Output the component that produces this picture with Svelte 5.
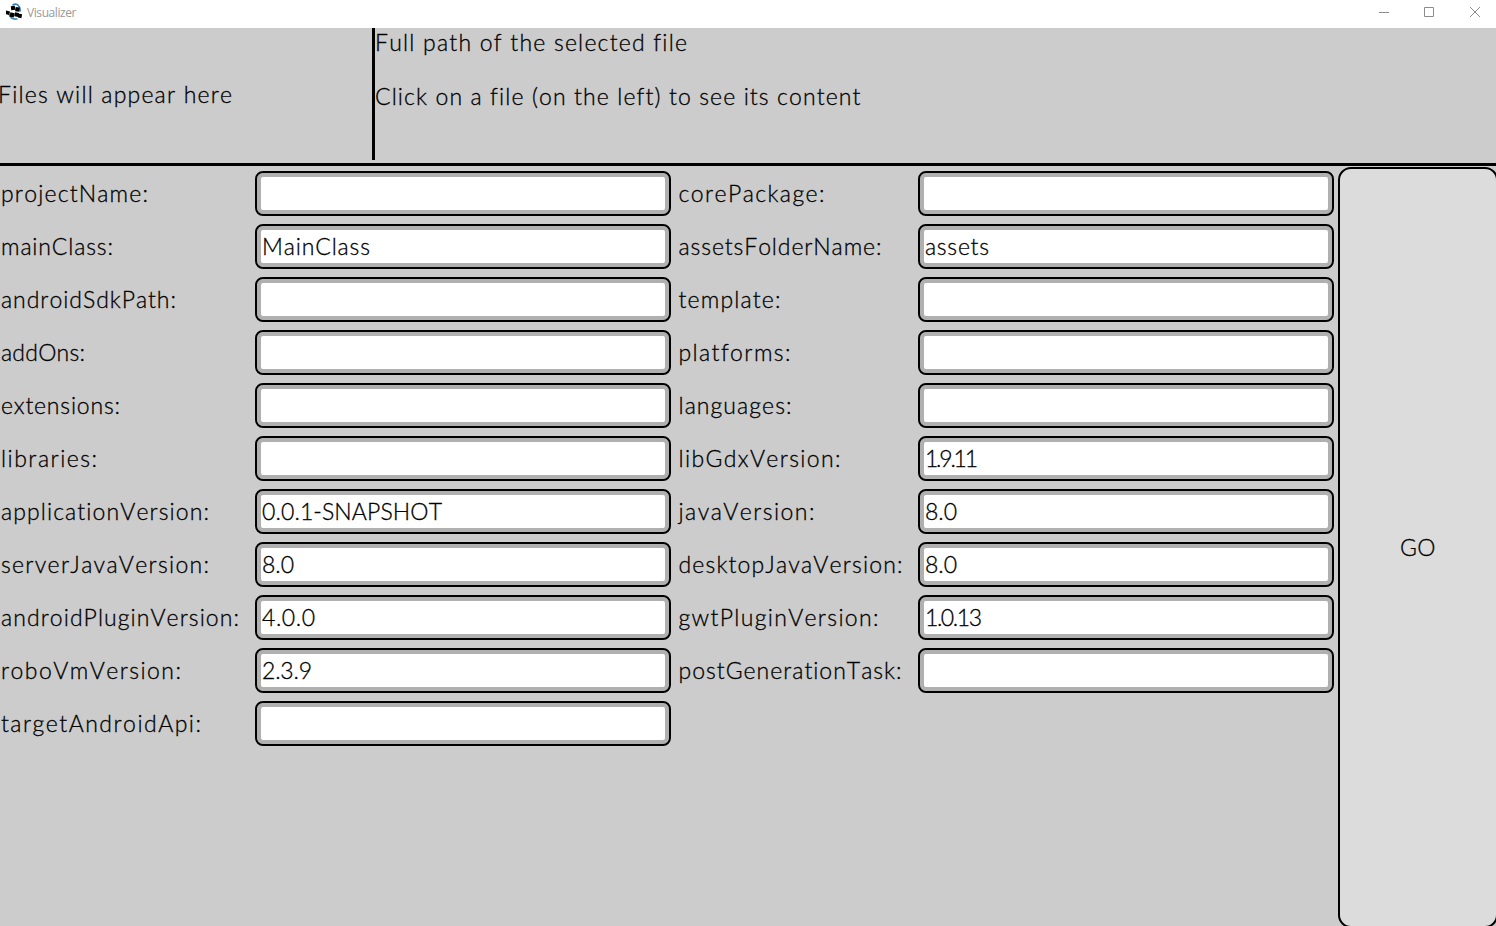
<script>
  const rows = [
    [['projectName:', 146, '', 0], ['corePackage:', 145, '', 0]],
    [['mainClass:', 111, 'MainClass', 107], ['assetsFolderName:', 202, 'assets', 63]],
    [['androidSdkPath:', 174, '', 0], ['template:', 101, '', 0]],
    [['addOns:', 83, '', 0], ['platforms:', 111, '', 0]],
    [['extensions:', 118, '', 0], ['languages:', 112, '', 0]],
    [['libraries:', 95, '', 0], ['libGdxVersion:', 161, '1.9.11', 52]],
    [['applicationVersion:', 207, '0.0.1-SNAPSHOT', 179], ['javaVersion:', 135, '8.0', 31]],
    [['serverJavaVersion:', 207, '8.0', 31], ['desktopJavaVersion:', 223, '8.0', 31]],
    [['androidPluginVersion:', 237, '4.0.0', 52], ['gwtPluginVersion:', 199, '1.0.13', 56]],
    [['roboVmVersion:', 179, '2.3.9', 49], ['postGenerationTask:', 222, '', 0]],
    [['targetAndroidApi:', 199, '', 0]],
  ];

  // Spreads the letters so that the text spans the given width.
  function fit(node, width) {
    const natural = node.getBoundingClientRect().width;
    const gaps = node.textContent.length - 1;
    if (gaps > 0) node.style.letterSpacing = `${(width + 1 - natural) / gaps}px`;
  }
</script>

<div class="window">
  <header>
    <svg class="logo" width="18" height="18" viewBox="0 0 18 18">
      <path d="M6.5 2.2C10.5-.6 14.6 2.8 14.2 8.500M3.200 11.500c1.600 3.800 4.800 5.300 8.300 4.300" fill="none" stroke="#3c82bd" stroke-width="1.700" />
      <path d="M4.800 3.200l4-.5.500 4.100-4.100.400zM9.700 4l4.200.600-.600 4.200-4.200-.600zM0 7.600l4 .800-.700 3.600-3.600-.900zM4.400 9.300l4.200.900-.9 4.200-4.200-1zM9 9.300l3.900.8-.7 3.900-3.900-.8zM12.600 10.500l3.500.8-.7 4-3.500-.9z" />
    </svg>
    <span class="title"><span use:fit={48.5}>Visualizer</span></span>
    <svg class="controls" width="106" height="14" viewBox="0 0 106 14" fill="none" stroke="#8c8c8c">
      <path d="M3 6.5h10M48.500 1.500h9v9h-9z" />
      <path d="M94 1l10 10M104 1l-10 10" />
    </svg>
  </header>

  <section class="viewer">
    <div class="files"><span use:fit={233}>Files will appear here</span></div>
    <div class="content">
      <p><span use:fit={311}>Full path of the selected file</span></p>
      <p><span use:fit={484.5}>Click on a file (on the left) to see its content</span></p>
    </div>
  </section>

  <main>
    <div class="form">
      {#each rows as row}
        {#each row as [label, width, value, valueWidth]}
          <div class="label"><span use:fit={width}>{label}</span></div>
          <div class="field">{#if value}<span use:fit={valueWidth}>{value}</span>{/if}</div>
        {/each}
      {/each}
    </div>
    <button><span use:fit={34.500}>GO</span></button>
  </main>
</div>

<style>
  :global(body) { margin: 0; overflow: hidden; }
  .window {
    width: 1496px; height: 926px; overflow: hidden;
    display: flex; flex-direction: column;
    background: #ccc; color: #000;
    font: 300 23px/30px "Lato Light", Lato, sans-serif;
    -webkit-text-stroke: 0.3px #000;
    font-kerning: none; font-variant-ligatures: none;
    white-space: nowrap;
  }
  header {
    flex: none; height: 28px; box-sizing: border-box; padding: 0 14px 0 6px;
    display: flex; background: #fff; -webkit-text-stroke: 0;
  }
  .logo { margin-top: 3px; }
  .title {
    flex: 1; margin-left: 3px; color: #999;
    font: 400 12px/26px "Open Sans", sans-serif;
  }
  .controls { margin-top: 6px; }
  .viewer {
    flex: none; height: 135px; display: flex;
    border-bottom: 3px solid #000;
  }
  .files {
    width: 375px; height: 132px; padding-top: 51px; box-sizing: border-box;
    border-right: 3px solid #000; text-indent: -2px;
  }
  .content { margin-top: -1px; }
  p { margin: 0 0 24px; }
  main { flex: 1; display: flex; min-height: 0; }
  .form {
    flex: none; width: 1338px; padding-top: 5px; box-sizing: border-box;
    display: grid; align-content: start;
    grid-template-columns: 255px 416px 247px 416px;
    grid-auto-rows: 45px; row-gap: 8px;
  }
  .label { padding: 7px 0 0 1px; }
  .label:nth-child(4n + 3) { padding-left: 7.5px; }
  .field {
    box-sizing: border-box; border: 2px solid #000; border-radius: 8px;
    padding: 5px; background: #fff; box-shadow: inset 0 0 0 4px #b0b0b0;
  }
  button {
    flex: none; width: 160px; height: 761px; margin-top: 1px; padding: 0 0 2px;
    border: 2px solid #000; border-radius: 13px; background: #dcdcdc;
    color: #000; font: inherit;
  }
</style>
